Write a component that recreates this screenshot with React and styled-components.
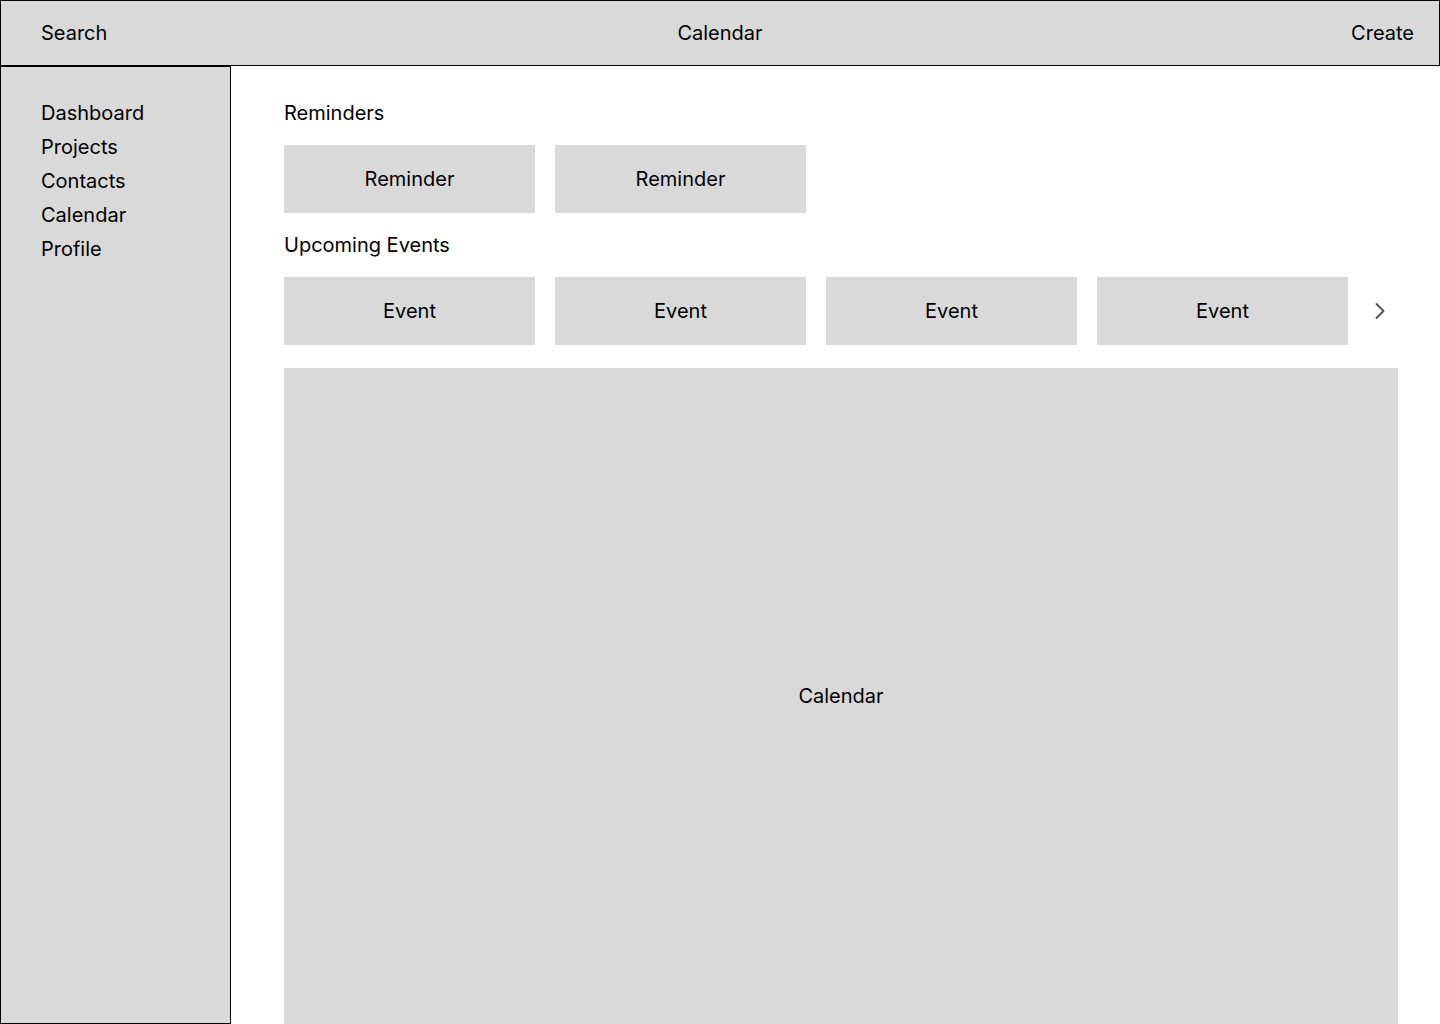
import React from "react";
import styled, { createGlobalStyle } from "styled-components";

const Global = createGlobalStyle`
  html, body { margin: 0; padding: 0; background: #fff; }
  body { font-family: Inter, "Noto Sans", sans-serif; color: #000; overflow: hidden; }
  * { box-sizing: border-box; }
`;

const Page = styled.div`
  width: 1440px;
  height: 1024px;
  display: flex;
  flex-direction: column;
`;

const Header = styled.header`
  height: 66px;
  flex: none;
  background: #d9d9d9;
  border: 1px solid #000;
  display: grid;
  grid-template-columns: 1fr auto 1fr;
  align-items: center;
  font-size: 20px;
`;

const HeaderItem = styled.div`
  justify-self: ${(p) => p.$align || "start"};
  padding: ${(p) => p.$pad || "0"};
  line-height: 24px;
`;

const Body = styled.div`
  flex: 1;
  display: flex;
  min-height: 0;
`;

const Sidebar = styled.nav`
  width: 231px;
  flex: none;
  background: #d9d9d9;
  border: 1px solid #000;
  padding: 29px 0 0 40px;
  display: flex;
  flex-direction: column;
`;

const NavItem = styled.div`
  font-size: 20px;
  line-height: 34px;
`;

const Main = styled.main`
  flex: 1;
  padding: 35px 42px 0 53px;
  display: flex;
  flex-direction: column;
  min-width: 0;
`;

const SectionTitle = styled.div`
  font-size: 20px;
  line-height: 24px;
  margin-bottom: 20px;
`;

const Row = styled.div`
  display: flex;
  gap: 20px;
  align-items: center;
  margin-bottom: ${(p) => p.$mb || 20}px;
`;

const Card = styled.div`
  width: 251px;
  height: 68px;
  flex: none;
  background: #d9d9d9;
  display: flex;
  align-items: center;
  justify-content: center;
  font-size: 20px;
`;

const Chevron = styled.svg`
  flex: none;
`;

const CalendarBox = styled.div`
  flex: 1;
  background: #d9d9d9;
  display: flex;
  align-items: center;
  justify-content: center;
  font-size: 20px;
`;

export default function App() {
  return (
    <>
      <Global />
      <Page>
        <Header>
          <HeaderItem $pad="0 0 0 40px">Search</HeaderItem>
          <HeaderItem $align="center">Calendar</HeaderItem>
          <HeaderItem $align="end" $pad="0 25px 0 0">Create</HeaderItem>
        </Header>
        <Body>
          <Sidebar>
            {["Dashboard", "Projects", "Contacts", "Calendar", "Profile"].map((n) => (
              <NavItem key={n}>{n}</NavItem>
            ))}
          </Sidebar>
          <Main>
            <SectionTitle>Reminders</SectionTitle>
            <Row>
              <Card>Reminder</Card>
              <Card>Reminder</Card>
            </Row>
            <SectionTitle>Upcoming Events</SectionTitle>
            <Row $mb={23}>
              <Card>Event</Card>
              <Card>Event</Card>
              <Card>Event</Card>
              <Card>Event</Card>
              <Chevron width="24" height="24" viewBox="0 0 24 24" fill="none">
                <polyline points="8.5,5 15.5,12 8.5,19" stroke="#555" strokeWidth="2" strokeLinecap="round" strokeLinejoin="round" />
              </Chevron>
            </Row>
            <CalendarBox>Calendar</CalendarBox>
          </Main>
        </Body>
      </Page>
    </>
  );
}
